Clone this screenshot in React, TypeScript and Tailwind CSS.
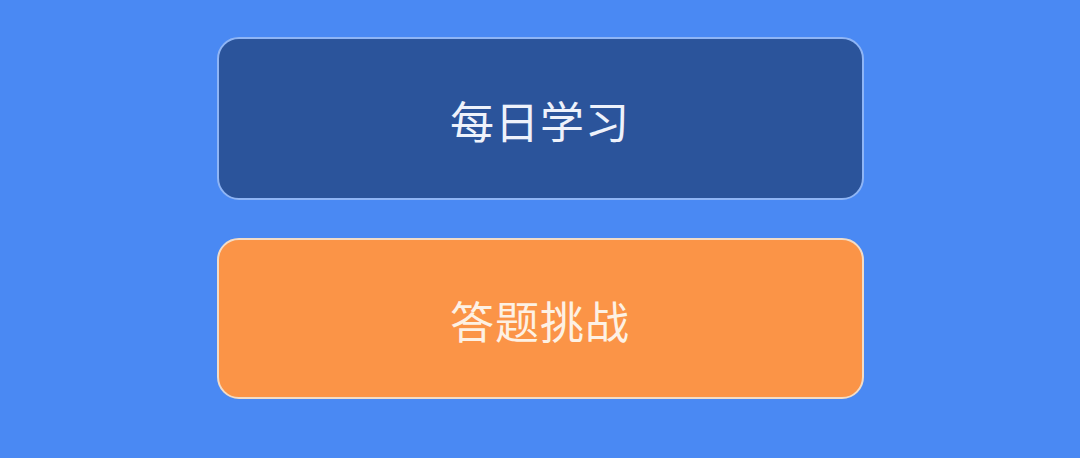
export default function App(): React.JSX.Element {
  return (
    <div
      className="w-[1080px] h-[458px] bg-[#4a89f3] flex flex-col items-center pt-[37px] gap-[38px]"
      style={{ fontFamily: '"Noto Sans CJK SC", "Noto Sans", sans-serif' }}
    >
      <button className="w-[647px] h-[163px] rounded-[22px] border-2 border-[#8fb5f5] bg-[#2b549b] text-[#eef2fb] text-[44px] font-normal tracking-[1px] flex items-center justify-center pt-[3px]">
        每日学习
      </button>
      <button className="w-[647px] h-[161px] rounded-[22px] border-2 border-[#f3dcc6] bg-[#fb9447] text-[#fdf1e4] text-[44px] font-normal tracking-[1px] flex items-center justify-center pt-[3px]">
        答题挑战
      </button>
    </div>
  );
}
